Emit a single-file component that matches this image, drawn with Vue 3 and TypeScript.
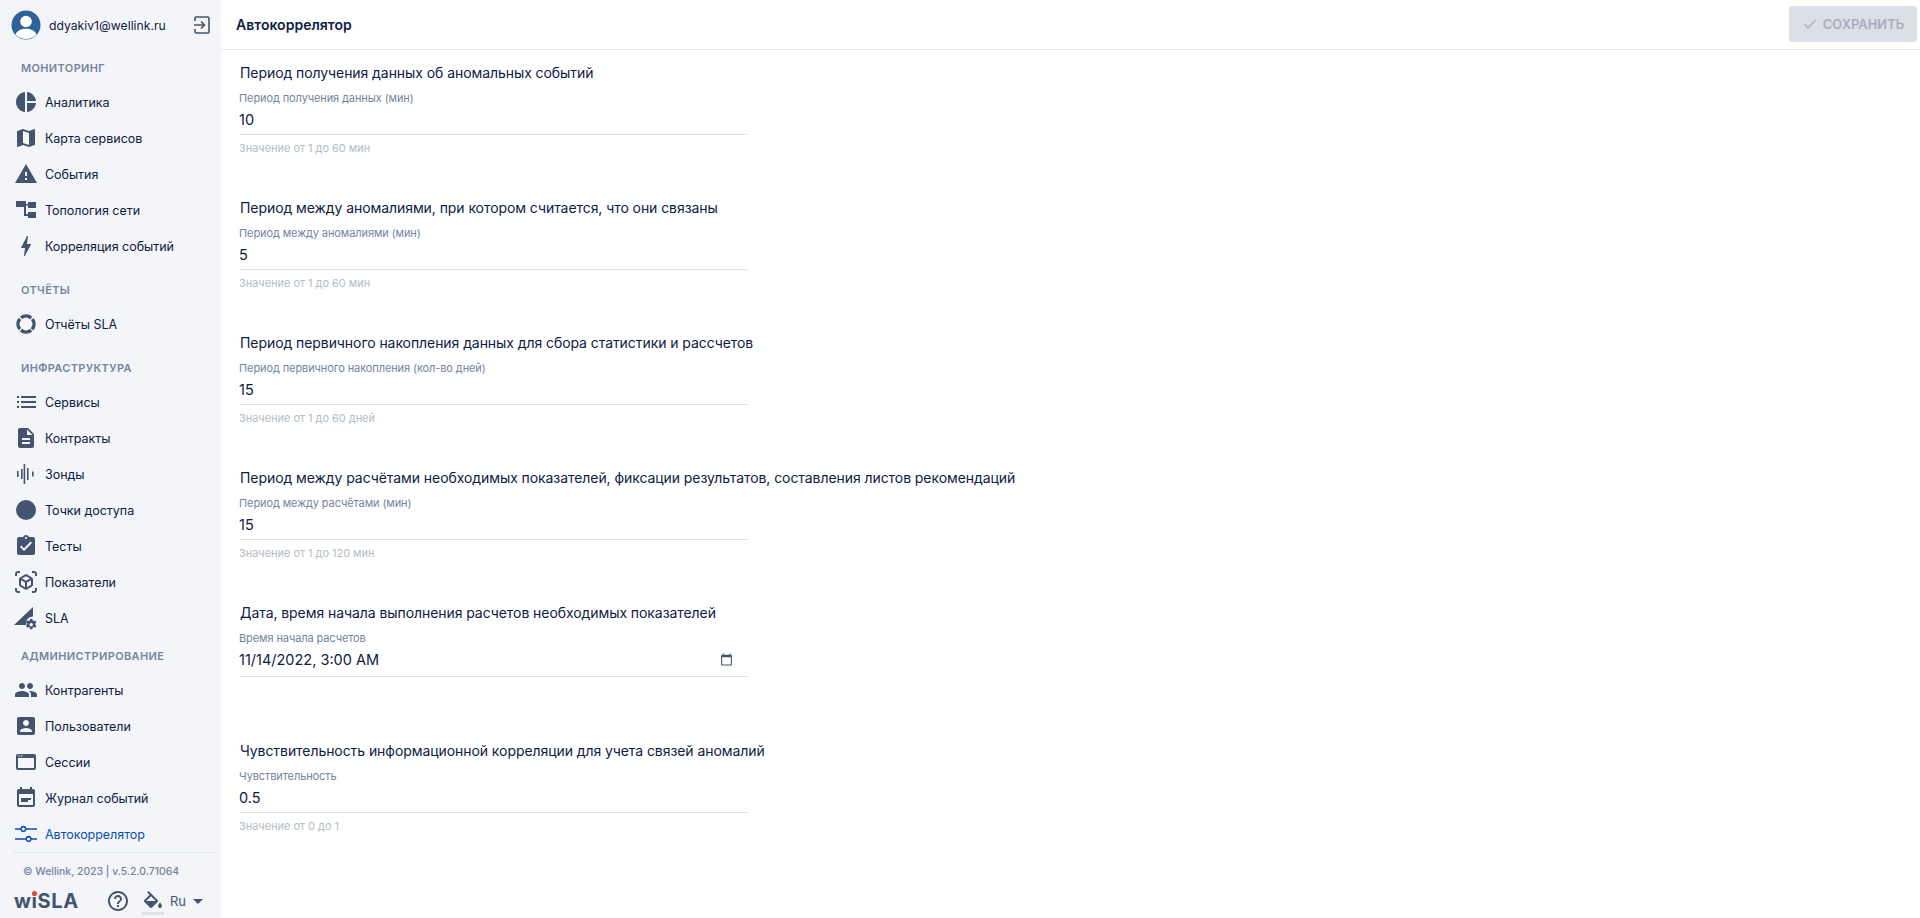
<script setup lang="ts">
type NavItem = { label: string; icon: string; active?: boolean };
type NavSection = { title: string; items: NavItem[] };
type Field = { title: string; label: string; value: string; hint?: string; date?: boolean };

const icons = {
  pie: "M11 2v20c-5.07-.5-9-4.79-9-10s3.93-9.5 9-10zm2.03 0v8.99H22c-.47-4.74-4.24-8.52-8.97-8.99zm0 11.01V22c4.74-.47 8.5-4.25 8.97-8.99h-8.97z",
  map: "M20.5 3l-.16.03L15 5.1 9 3 3.36 4.9c-.21.07-.36.25-.36.48V20.5c0 .28.22.5.5.5l.16-.03L9 18.9l6 2.1 5.64-1.9c.21-.07.36-.25.36-.48V3.5c0-.28-.22-.5-.5-.5zM15 19l-6-2.11V5l6 2.11V19z",
  warning: "M1 21h22L12 2 1 21zm12-3h-2v-2h2v2zm0-4h-2v-4h2v4z",
  tree: "M2 3h10v6H2zM14 4h8v6h-8zM14 14h8v6h-8zM10 6h4v1.6h-4zM10 9h2v7h2v2h-4z",
  bolt: "M11 22h-1l1-8H7.5c-.58 0-.57-.32-.38-.66.19-.34.05-.08.07-.12C8.48 10.94 10.42 7.54 13 2h1l-1 8h3.5c.49 0 .56.33.47.51l-.07.15C12.96 17.55 11 22 11 22z",
  list: "M3 13h2v-2H3v2zm0 5h2v-2H3v2zm0-10h2V6H3v2zm4 5h15v-2H7v2zm0 5h15v-2H7v2zM7 6v2h15V6H7z",
  doc: "M14 2H6c-1.1 0-1.99.9-1.99 2L4 20c0 1.1.89 2 1.99 2H18c1.1 0 2-.9 2-2V8l-6-6zm2 16H8v-2h8v2zm0-4H8v-2h8v2zm-3-5V3.5L18.5 9H13z",
  wave: "M3 9h1.600v6H3zM7 7h1.600v10H7zM9.600 2h1.600v20H9.600zM13 6h1.600v12H13zM18 9.500h1.600v5H18z",
  circle: "M12 2a10 10 0 1 0 0 20 10 10 0 0 0 0-20z",
  test: "M19 3h-4.18C14.4 1.84 13.3 1 12 1c-1.3 0-2.4.84-2.82 2H5c-1.1 0-2 .9-2 2v14c0 1.1.9 2 2 2h14c1.1 0 2-.9 2-2V5c0-1.1-.9-2-2-2zm-7 0c.55 0 1 .45 1 1s-.45 1-1 1-1-.45-1-1 .45-1 1-1zm-2 14l-4-4 1.41-1.41L10 14.17l6.59-6.59L18 9l-8 8z",
  cube: "M3 4c0-.55.45-1 1-1h2V1H4C2.34 1 1 2.34 1 4v2h2V4zm0 16v-2H1v2c0 1.66 1.34 3 3 3h2v-2H4c-.55 0-1-.45-1-1zM20 1h-2v2h2c.55 0 1 .45 1 1v2h2V4c0-1.66-1.34-3-3-3zm1 19c0 .55-.45 1-1 1h-2v2h2c1.66 0 3-1.34 3-3v-2h-2v2zm-2-5.13V9.13c0-.72-.38-1.38-1-1.73l-5-2.88c-.31-.18-.65-.27-1-.27s-.69.09-1 .27L6 7.39c-.62.36-1 1.02-1 1.74v5.74c0 .72.38 1.38 1 1.73l5 2.88c.31.18.65.27 1 .27s.69-.09 1-.27l5-2.88c.62-.35 1-1.01 1-1.73zm-8 2.3l-4-2.3v-4.63l4 2.33v4.6zm1-6.33L8.04 8.53 12 6.25l3.96 2.28L12 10.84zm5 4.03l-4 2.3v-4.6l4-2.33v4.63z",
  sla: "M19 1v9.6a6.5 6.5 0 0 0-6.6 8.4H0zM18.4 13l.3 1.6c.4.1.7.3 1 .5l1.5-.6 1.2 2-1.2 1c.1.4.1.8 0 1.2l1.2 1-1.2 2-1.5-.6c-.3.2-.6.4-1 .5l-.3 1.6H16l-.3-1.6c-.4-.1-.7-.3-1-.5l-1.5.6-1.2-2 1.2-1c-.1-.4-.1-.8 0-1.2l-1.2-1 1.2-2 1.5.6c.3-.2.6-.4 1-.5L16 13zm-1.2 4a1.7 1.7 0 1 0 0 3.4 1.7 1.7 0 0 0 0-3.4z",
  people: "M16 11c1.66 0 2.99-1.34 2.99-3S17.66 5 16 5c-1.66 0-3 1.34-3 3s1.34 3 3 3zm-8 0c1.66 0 2.99-1.34 2.99-3S9.66 5 8 5C6.34 5 5 6.34 5 8s1.34 3 3 3zm0 2c-2.33 0-7 1.17-7 3.5V19h14v-2.5c0-2.33-4.67-3.5-7-3.5zm8 0c-.29 0-.62.02-.97.05 1.16.84 1.97 1.97 1.97 3.45V19h6v-2.5c0-2.33-4.67-3.5-7-3.5z",
  user: "M3 5v14c0 1.1.89 2 2 2h14c1.1 0 2-.9 2-2V5c0-1.1-.9-2-2-2H5c-1.11 0-2 .9-2 2zm12 4c0 1.66-1.34 3-3 3s-3-1.34-3-3 1.34-3 3-3 3 1.34 3 3zm-9 8c0-2 4-3.1 6-3.1s6 1.1 6 3.1v1H6v-1z",
  session: "M20 4H4c-1.11 0-2 .9-2 2v12c0 1.1.89 2 2 2h16c1.1 0 2-.9 2-2V6c0-1.1-.89-2-2-2zm0 14H4V8h16v10zM4.500 5.300h1.200v1.200H4.500zM7 5.300h1.200v1.200H7z",
  journal: "M17 12H7v2h10v-2zm2-9h-1V1h-2v2H8V1H6v2H5c-1.11 0-1.99.9-1.99 2L3 19c0 1.1.89 2 2 2h14c1.1 0 2-.9 2-2V5c0-1.1-.9-2-2-2zm0 16H5V8h14v11zm-5-5H7v2h7v-2z",
  tune: "M1 6.2h5.3a3.2 3.2 0 0 1 6.2 0H23v1.6H12.5a3.2 3.2 0 0 1-6.2 0H1zM9.4 5.4a1.6 1.6 0 1 0 0 3.2 1.6 1.6 0 0 0 0-3.2zM1 16.2h10.5a3.2 3.2 0 0 1 6.2 0H23v1.6h-5.3a3.2 3.2 0 0 1-6.2 0H1zM14.6 15.4a1.6 1.6 0 1 0 0 3.2 1.6 1.6 0 0 0 0-3.2z",
};

const sections: NavSection[] = [
  {
    title: "Мониторинг",
    items: [
      { label: "Аналитика", icon: icons.pie },
      { label: "Карта сервисов", icon: icons.map },
      { label: "События", icon: icons.warning },
      { label: "Топология сети", icon: icons.tree },
      { label: "Корреляция событий", icon: icons.bolt },
    ],
  },
  { title: "Отчёты", items: [{ label: "Отчёты SLA", icon: "donut" }] },
  {
    title: "Инфраструктура",
    items: [
      { label: "Сервисы", icon: icons.list },
      { label: "Контракты", icon: icons.doc },
      { label: "Зонды", icon: icons.wave },
      { label: "Точки доступа", icon: icons.circle },
      { label: "Тесты", icon: icons.test },
      { label: "Показатели", icon: icons.cube },
      { label: "SLA", icon: icons.sla },
    ],
  },
  {
    title: "Администрирование",
    items: [
      { label: "Контрагенты", icon: icons.people },
      { label: "Пользователи", icon: icons.user },
      { label: "Сессии", icon: icons.session },
      { label: "Журнал событий", icon: icons.journal },
      { label: "Автокоррелятор", icon: icons.tune, active: true },
    ],
  },
];

const fields: Field[] = [
  {
    title: "Период получения данных об аномальных событий",
    label: "Период получения данных (мин)",
    value: "10",
    hint: "Значение от 1 до 60 мин",
  },
  {
    title: "Период между аномалиями, при котором считается, что они связаны",
    label: "Период между аномалиями (мин)",
    value: "5",
    hint: "Значение от 1 до 60 мин",
  },
  {
    title: "Период первичного накопления данных для сбора статистики и рассчетов",
    label: "Период первичного накопления (кол-во дней)",
    value: "15",
    hint: "Значение от 1 до 60 дней",
  },
  {
    title: "Период между расчётами необходимых показателей, фиксации результатов, составления листов рекомендаций",
    label: "Период между расчётами (мин)",
    value: "15",
    hint: "Значение от 1 до 120 мин",
  },
  {
    title: "Дата, время начала выполнения расчетов необходимых показателей",
    label: "Время начала расчетов",
    value: "11/14/2022, 3:00 AM",
    date: true,
  },
  {
    title: "Чувствительность информационной корреляции для учета связей аномалий",
    label: "Чувствительность",
    value: "0.5",
    hint: "Значение от 0 до 1",
  },
];
</script>

<template>
  <div class="page">
    <aside class="sidebar">
      <div class="user">
        <svg class="avatar" viewBox="0 0 30 30">
          <circle cx="15" cy="15" r="14.5" fill="#2f6296" />
          <circle cx="15" cy="11.5" r="5.8" fill="#fff" />
          <path d="M4.500 24.500c1.600-4 6-5.700 10.500-5.700s8.900 1.700 10.500 5.700a14.500 14.500 0 0 1-21 0z" fill="#fff" />
        </svg>
        <span class="email">ddyakiv1@wellink.ru</span>
        <svg class="logout" viewBox="0 0 18 18">
          <path d="M2 5V2.200C2 1.500 2.500 1 3.200 1h11.600c.7 0 1.200.5 1.200 1.200v13.600c0 .7-.5 1.200-1.200 1.200H3.200C2.500 17 2 16.500 2 15.800V13" fill="none" stroke="#44546f" stroke-width="1.600" />
          <path d="M1 9h10M8 5.500 11.500 9 8 12.500" fill="none" stroke="#44546f" stroke-width="1.600" />
        </svg>
      </div>

      <nav class="nav">
        <section v-for="s in sections" :key="s.title" class="section">
          <div class="section-title">{{ s.title }}</div>
          <div v-for="item in s.items" :key="item.label" class="item" :class="{ active: item.active }">
            <svg v-if="item.icon === 'donut'" class="icon" viewBox="0 0 24 24">
              <circle cx="12" cy="12" r="8" fill="none" stroke="#44546f" stroke-width="3.400" stroke-dasharray="11 1.570" transform="rotate(50 12 12)" />
            </svg>
            <svg v-else class="icon" viewBox="0 0 24 24">
              <path :d="item.icon" />
            </svg>
            <span>{{ item.label }}</span>
          </div>
        </section>
      </nav>

      <div class="copyright">© Wellink, 2023 | v.5.2.0.71064</div>

      <div class="footer">
        <div class="logo">wiSLA<span class="logo-dot"></span></div>
        <svg class="help" viewBox="0 0 24 24">
          <path d="M11 18h2v-2h-2v2zm1-16C6.480 2 2 6.480 2 12s4.480 10 10 10 10-4.480 10-10S17.520 2 12 2zm0 18c-4.410 0-8-3.590-8-8s3.590-8 8-8 8 3.590 8 8-3.590 8-8 8zm0-14c-2.210 0-4 1.790-4 4h2c0-1.100.900-2 2-2s2 .900 2 2c0 2-3 1.750-3 5h2c0-2.250 3-2.500 3-5 0-2.210-1.790-4-4-4z" />
        </svg>
        <div class="theme">
          <svg viewBox="0 0 24 24">
            <path d="M16.560 8.940 7.620 0 6.210 1.410l2.380 2.380-5.150 5.150c-.59.59-.59 1.540 0 2.120l5.500 5.500c.29.290.68.440 1.060.44s.77-.15 1.060-.44l5.500-5.500c.59-.58.59-1.530 0-2.120zM5.210 10 10 5.210 14.790 10H5.210zM19 11.500s-2 2.170-2 3.500c0 1.100.900 2 2 2s2-.900 2-2c0-1.330-2-3.500-2-3.500z" />
          </svg>
          <span class="theme-bar"></span>
        </div>
        <div class="lang">
          <span>Ru</span>
          <span class="caret"></span>
        </div>
      </div>
    </aside>

    <main class="main">
      <header class="header">
        <h1>Автокоррелятор</h1>
        <button class="save" type="button" disabled>
          <svg viewBox="0 0 24 24"><path d="M9 16.170 4.830 12l-1.420 1.410L9 19 21 7l-1.410-1.410z" /></svg>
          Сохранить
        </button>
      </header>

      <div class="form">
        <div v-for="f in fields" :key="f.title" class="field" :class="{ 'field-date': f.date }">
          <h2>{{ f.title }}</h2>
          <label>{{ f.label }}</label>
          <div class="input">
            <span>{{ f.value }}</span>
            <svg v-if="f.date" class="calendar" viewBox="0 0 24 24">
              <path d="M20 3h-1V1h-2v2H7V1H5v2H4c-1.100 0-2 .900-2 2v16c0 1.100.900 2 2 2h16c1.100 0 2-.900 2-2V5c0-1.100-.900-2-2-2zm0 18H4V8h16v13z" />
            </svg>
          </div>
          <div v-if="f.hint" class="hint">{{ f.hint }}</div>
        </div>
      </div>
    </main>
  </div>
</template>

<style scoped>
.page {
  display: flex;
  height: 918px;
  overflow: hidden;
  font-family: Inter, "Liberation Sans", sans-serif;
  color: #0f2044;
  background: #fff;
}

.sidebar {
  width: 221px;
  flex: none;
  background: #f3f5f8;
  display: flex;
  flex-direction: column;
}

.user {
  height: 48px;
  box-sizing: border-box;
  padding: 2px 10px 0 11px;
  display: flex;
  align-items: center;
}

.avatar {
  width: 30px;
  height: 30px;
  flex: none;
}

.email {
  margin-left: 8px;
  font-size: 12.2px;
  flex: 1;
}

.logout {
  width: 18px;
  height: 18px;
}

.section {
  margin-top: 6px;
}

.section:first-child,
.section:last-child {
  margin-top: 0;
}

.section-title {
  height: 36px;
  box-sizing: border-box;
  padding: 4px 0 0 21px;
  display: flex;
  align-items: center;
  font-size: 11px;
  font-weight: 600;
  letter-spacing: 0.35px;
  text-transform: uppercase;
  color: #76849e;
}

.item {
  height: 36px;
  display: flex;
  align-items: center;
  padding-left: 14px;
  font-size: 12.5px;
  letter-spacing: -0.03px;
}

.icon {
  width: 24px;
  height: 24px;
  flex: none;
  margin-right: 7px;
  fill: #44546f;
}

.item.active {
  color: #0b4fb3;
}

.item.active .icon {
  fill: #0b4fb3;
}

.copyright {
  height: 36px;
  border-top: 1px solid #e3e6ec;
  margin: 0 7px 0 13px;
  padding-left: 10px;
  display: flex;
  align-items: center;
  font-size: 10.4px;
  font-weight: 500;
  color: #76849e;
}

.footer {
  height: 24px;
  display: flex;
  align-items: center;
  padding-left: 14px;
}

.logo {
  position: relative;
  width: 65px;
  font-size: 20px;
  font-weight: 700;
  letter-spacing: 0.6px;
  color: #44546f;
}

.logo-dot {
  position: absolute;
  left: 18px;
  top: 2px;
  width: 5px;
  height: 5px;
  border-radius: 50%;
  background: #e8453c;
}

.help {
  width: 24px;
  height: 24px;
  margin-left: 27px;
  fill: #44546f;
}

.theme {
  position: relative;
  width: 24px;
  height: 24px;
  margin: 4px 0 0 11px;
}

.theme svg {
  display: block;
  width: 24px;
  height: 24px;
  fill: #44546f;
}

.theme-bar {
  position: absolute;
  left: 1px;
  top: 21px;
  width: 22px;
  height: 3px;
  background: #dfe2e9;
}

.lang {
  display: flex;
  align-items: center;
  margin-left: 5px;
  font-size: 13px;
  color: #44546f;
}

.caret {
  margin-left: 7px;
  border-left: 5px solid transparent;
  border-right: 5px solid transparent;
  border-top: 5px solid #44546f;
}

.main {
  flex: 1;
  min-width: 0;
}

.header {
  height: 50px;
  box-sizing: border-box;
  border-bottom: 1px solid #e9ebf0;
  display: flex;
  align-items: center;
  justify-content: space-between;
  padding: 0 3px 0 15px;
}

h1 {
  margin: 0;
  font-size: 14px;
  font-weight: 600;
  letter-spacing: 0.02px;
}

.save {
  width: 128px;
  height: 36px;
  margin-top: -1px;
  border: 0;
  border-radius: 3px;
  background: #dcdfe6;
  color: #a5aebf;
  font-family: inherit;
  font-size: 12.8px;
  font-weight: 600;
  letter-spacing: 0.1px;
  text-transform: uppercase;
  display: flex;
  align-items: center;
  justify-content: center;
  gap: 5px;
}

.save svg {
  width: 16px;
  height: 16px;
  fill: #a5aebf;
}

.form {
  padding: 13px 0 0 18px;
}

.field {
  height: 135px;
  width: 508px;
  white-space: nowrap;
}

.field-date {
  height: 138px;
}

h2 {
  margin: 0 0 0 1px;
  height: 20px;
  line-height: 20px;
  font-size: 14px;
  font-weight: 400;
  letter-spacing: -0.07px;
}

label {
  display: block;
  margin: 8px 0 0;
  height: 15px;
  line-height: 15px;
  font-size: 11px;
  letter-spacing: -0.1px;
  color: #76849e;
}

.input {
  height: 29px;
  box-sizing: border-box;
  border-bottom: 1px solid #dfe2e9;
  display: flex;
  align-items: center;
  justify-content: space-between;
  padding: 0 14px 2px 0;
  font-size: 14.5px;
}

.field-date .input {
  height: 31px;
  padding-bottom: 3px;
}

.calendar {
  width: 13px;
  height: 13px;
  fill: #44546f;
}

.hint {
  margin: 6px 0 0;
  font-size: 11px;
  line-height: 15px;
  letter-spacing: -0.04px;
  color: #b4bbc9;
}
</style>

<style>
html,
body {
  margin: 0;
}
</style>
